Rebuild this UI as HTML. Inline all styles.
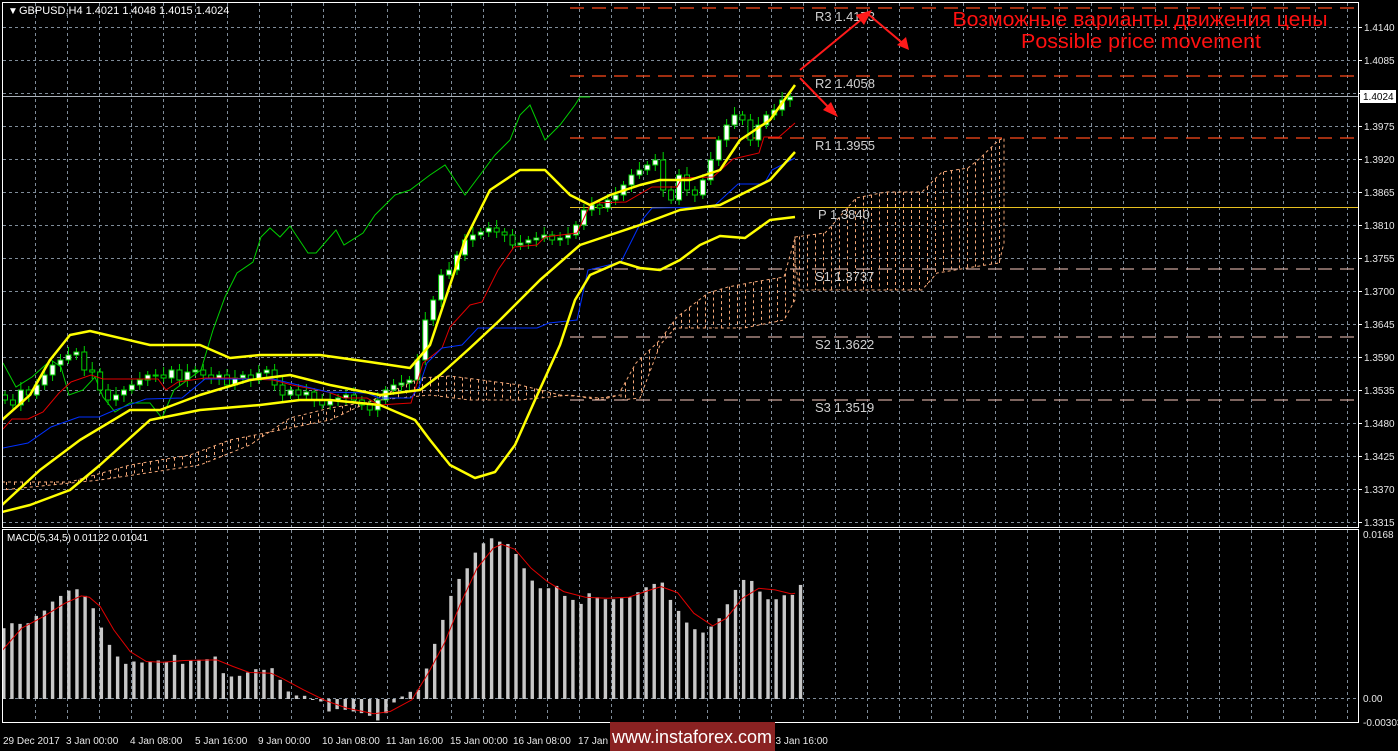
<!DOCTYPE html>
<html><head><meta charset="utf-8"><style>
html,body{margin:0;padding:0;background:#000;overflow:hidden}
svg{display:block}
text{font-family:"Liberation Sans",sans-serif}
</style></head><body>
<svg id="s" width="1398" height="751" xmlns="http://www.w3.org/2000/svg">
<defs>
<clipPath id="cm"><rect x="3" y="3" width="1355" height="524"/></clipPath>
<clipPath id="cd"><rect x="3" y="530" width="1355" height="192"/></clipPath>
</defs>
<rect width="1398" height="751" fill="#000"/>
<g id="grid" stroke="#7f8c99" stroke-width="1" stroke-dasharray="3,3"></g>
<g clip-path="url(#cm)">
<g id="cloud"></g>
<g stroke-width="1.3" stroke-dasharray="14,8">
<line x1="570" y1="8" x2="1358" y2="8" stroke="#ff4a1a"/>
<line x1="570" y1="76" x2="1358" y2="76" stroke="#ff4a1a"/>
<line x1="570" y1="138" x2="1358" y2="138" stroke="#ff4a1a"/>
<line x1="570" y1="269" x2="1358" y2="269" stroke="#c9a39a"/>
<line x1="570" y1="337" x2="1358" y2="337" stroke="#c9a39a"/>
<line x1="570" y1="400" x2="1358" y2="400" stroke="#c9a39a"/>
</g>
<line x1="570" y1="207.5" x2="1358" y2="207.5" stroke="#e8c020" stroke-width="1"/>
<line x1="2" y1="96.5" x2="1358" y2="96.5" stroke="#a9b0b8" stroke-width="1"/>
<g font-family="Liberation Mono,monospace" font-size="13" fill="#d0d0d0">
<text x="815" y="21">R3 1.4173</text>
<text x="815" y="88">R2 1.4058</text>
<text x="815" y="150">R1 1.3955</text>
<text x="818" y="219">P 1.3840</text>
<text x="815" y="281">S1 1.3737</text>
<text x="815" y="349">S2 1.3622</text>
<text x="815" y="412">S3 1.3519</text>
</g>
<polyline fill="none" stroke="#00d000" stroke-width="1" points="3,363 16,387 32,377 51,360 61,367 69,395 83,390 95,377 103,397 115,412 130,403 150,403 162,418 174,390 201,370 213,330 225,297 237,273 253,262 261,237 270,228 280,237 290,226 308,253 316,253 336,230 344,245 363,233 375,215 395,195 410,190 430,175 445,165 455,180 465,195 480,175 495,155 510,140 520,115 530,105 545,140 560,125 575,105 580,97 590,97"/>
<g id="candles"></g>
<polyline fill="none" stroke="#e00000" stroke-width="1" points="3,429 12,419 28,419 43,412 59,393 71,382 91,375 103,379 158,379 166,390 178,382 205,378 229,378 273,380 292,385 328,392 344,398 367,398 379,405 411,403 423,363 442,348 450,327 470,305 482,302 498,270 514,247 537,245 545,237 577,233 591,203 626,202 652,187 677,187 682,178 713,177 733,159 759,153 764,137 779,137 795,123"/>
<polyline fill="none" stroke="#0030ff" stroke-width="1" points="3,448 28,443 51,427 79,417 99,417 115,410 146,399 182,398 205,379 273,379 328,392 367,393 379,398 411,398 419,387 427,363 442,348 462,345 478,328 537,328 549,323 577,320 588,270 621,262 642,220 652,208 713,207 738,184 764,184 772,170 795,158"/>
<g fill="none" stroke="#ffff00" stroke-width="2.5" stroke-linejoin="round">
<polyline points="2,420 30,395 50,360 70,335 90,331 150,345 200,345 230,358 260,355 320,355 370,362 410,368 430,345 445,300 465,240 490,190 520,170 545,170 570,195 590,205 610,195 640,185 660,180 690,180 720,170 740,140 770,120 795,85"/>
<polyline points="2,505 40,470 80,440 130,410 160,410 200,395 250,380 290,375 330,385 380,395 420,390 440,375 470,348 500,320 540,280 580,245 640,225 680,210 720,205 740,195 770,180 795,152"/>
<polyline points="2,512 30,505 70,490 100,465 150,420 200,410 260,405 300,400 330,400 380,405 415,420 430,440 450,465 475,478 495,472 515,445 535,400 560,345 575,300 590,275 620,262 640,268 660,270 680,260 700,245 720,236 745,238 770,220 795,217"/>
</g>
<g stroke="#ff1a1a" stroke-width="2" fill="none">
<line x1="800" y1="70" x2="868" y2="14"/>
<line x1="868" y1="14" x2="906" y2="46"/>
<line x1="800" y1="78" x2="834" y2="113"/>
</g>
<g fill="#ff1a1a">
<polygon points="872,10 856,15 864,25"/>
<polygon points="909,50 897,45 906,37"/>
<polygon points="838,117 823,110 831,102"/>
</g>
<text x="1140" y="26" text-anchor="middle" font-size="20" fill="#ff1010" textLength="375" lengthAdjust="spacingAndGlyphs">Возможные варианты движения цены</text>
<text x="1141" y="48" text-anchor="middle" font-size="20" fill="#ff1010" textLength="240" lengthAdjust="spacingAndGlyphs">Possible price movement</text>
</g>
<g clip-path="url(#cd)">
<g id="macd"></g>
<polyline id="sig" fill="none" stroke="#e00000" stroke-width="1"/>
</g>
<rect x="2.5" y="2.5" width="1356" height="525" fill="none" stroke="#fff" stroke-width="1"/>
<rect x="2.5" y="529.5" width="1356" height="193" fill="none" stroke="#fff" stroke-width="1"/>
<g id="axis" font-size="10" fill="#e8e8e8"></g>
<rect x="1360" y="90" width="36" height="13" fill="#fff"/>
<text x="1363" y="100" font-size="10" fill="#000">1.4024</text>
<text x="8" y="14" font-size="10" fill="#fff">&#9660;</text>
<text x="19" y="14" font-size="11" fill="#fff">GBPUSD,H4  1.4021 1.4048 1.4015 1.4024</text>
<text x="7" y="541" font-size="10" fill="#fff">MACD(5,34,5) 0.01122 0.01041</text>
<text x="1363" y="538" font-size="10" fill="#e8e8e8">0.0168</text>
<text x="1363" y="702" font-size="10" fill="#e8e8e8">0.00</text>
<text x="1363" y="726" font-size="10" fill="#e8e8e8">-0.00303</text>
<g font-size="10" fill="#e8e8e8">
<text x="3" y="744">29 Dec 2017</text><text x="66" y="744">3 Jan 00:00</text><text x="130" y="744">4 Jan 08:00</text>
<text x="195" y="744">5 Jan 16:00</text><text x="258" y="744">9 Jan 00:00</text><text x="322" y="744">10 Jan 08:00</text>
<text x="386" y="744">11 Jan 16:00</text><text x="450" y="744">15 Jan 00:00</text><text x="513" y="744">16 Jan 08:00</text>
<text x="578" y="744">17 Jan 16:00</text><text x="770" y="744">23 Jan 16:00</text>
</g>
<rect x="610" y="722" width="165" height="29" fill="#8a2222"/>
<text x="692" y="743" text-anchor="middle" font-size="18" fill="#fff">www.instaforex.com</text>
</svg>
<script>
var NS="http://www.w3.org/2000/svg",s=document.getElementById('s');
function el(p,t,a){var e=document.createElementNS(NS,t);for(var k in a)e.setAttribute(k,a[k]);p.appendChild(e);return e;}
var g=document.getElementById('grid');
for(var x=35;x<1358;x+=32){el(g,'line',{x1:x+.5,y1:3,x2:x+.5,y2:527});el(g,'line',{x1:x+.5,y1:530,x2:x+.5,y2:722});}
var labs=["1.4140","1.4085","1.4030","1.3975","1.3920","1.3865","1.3810","1.3755","1.3700","1.3645","1.3590","1.3535","1.3480","1.3425","1.3370","1.3315"];
var ax=document.getElementById('axis');
for(var i=0;i<16;i++){var y=27+i*33;el(g,'line',{x1:3,y1:y+.5,x2:1358,y2:y+.5});
 el(ax,'line',{x1:1358,y1:y+.5,x2:1362,y2:y+.5,stroke:'#fff'});
 if(i!=2){var t=el(ax,'text',{x:1364,y:y+4});t.textContent=labs[i];}}
el(g,'line',{x1:3,y1:698.5,x2:1358,y2:698.5});
var c=document.getElementById('cloud');
function cloud(top,bot){var pts=top.concat(bot.slice().reverse());
 el(c,'polygon',{points:pts.map(function(p){return p.join(',')}).join(' '),fill:'none',stroke:'#f4a878','stroke-width':1,'stroke-dasharray':'3,3'});
 function yAt(a,x){for(var i=0;i<a.length-1;i++){if(x>=a[i][0]&&x<=a[i+1][0]){var f=(x-a[i][0])/((a[i+1][0]-a[i][0])||1);return a[i][1]+f*(a[i+1][1]-a[i][1]);}}return null;}
 for(var x=top[0][0]+4;x<=top[top.length-1][0];x+=8){var a=yAt(top,x),b=yAt(bot,x);if(a!=null&&b!=null)el(c,'line',{x1:x+.5,y1:a,x2:x+.5,y2:b,stroke:'#f4a878','stroke-width':1,'stroke-dasharray':'3,3'});}}
cloud([[2,482],[70,482],[130,465],[190,455],[230,440],[280,430],[330,420],[420,378],[450,376],[520,385],[560,395],[600,398],[620,395]],[[2,490],[100,480],[200,465],[250,445],[290,418],[330,408],[380,400],[430,395],[470,400],[520,400],[570,395],[600,400],[620,395]]);
cloud([[621,390],[636,363],[660,340],[677,317],[708,293],[728,287],[754,282],[784,277],[795,238]],[[621,400],[640,398],[660,345],[675,328],[744,328],[784,320],[795,300]]);
cloud([[795,237],[825,233],[835,222],[856,198],[886,192],[922,192],[942,172],[968,168],[978,160],[999,140],[1004,138]],[[795,262],[800,290],[922,290],[937,273],[973,267],[999,263],[1004,243]]);
var cl=[400,405,390,395,385,375,365,360,355,352,370,372,390,400,395,390,385,380,375,375,378,370,380,372,370,375,378,375,385,378,375,380,373,370,385,395,390,395,392,400,405,400,398,395,400,405,410,400,390,385,383,380,360,320,300,275,270,255,240,235,232,228,232,235,245,243,240,238,235,240,238,235,225,210,205,208,200,195,185,175,170,165,160,190,200,175,190,195,180,160,140,125,115,120,140,125,115,110,100,97];
var cg=document.getElementById('candles'),prev=395;
for(var i=0;i<cl.length;i++){var x=5+i*7.93,o=prev,cc=cl[i],t=Math.min(o,cc),b=Math.max(o,cc);
 el(cg,'line',{x1:x,y1:t-4-(i%3)*2,x2:x,y2:b+4+(i%4),stroke:'#00d000','stroke-width':1});
 el(cg,'rect',{x:x-2.5,y:t,width:5,height:Math.max(b-t,1),fill:cc<o?'#fff':'#000',stroke:'#00d000','stroke-width':1});prev=cc;}
var mt=[355,340,342,340,318,302,275,258,242,238,258,295,353,405,440,462,455,458,455,452,455,435,462,452,450,448,440,490,500,498,488,478,480,475,510,545,557,558,568,575,605,598,600,605,610,618,632,610,578,560,546,540,476,402,330,258,207,175,128,100,85,95,102,132,175,212,235,235,228,258,270,282,250,262,268,268,265,262,247,232,222,218,270,303,338,358,368,350,325,283,240,210,213,245,268,268,256,255,225];
var mg=document.getElementById('macd');
for(var i=0;i<mt.length;i++){var x=3.8+8.13*i-1.7,y=510+mt[i]*0.333,z=699;
 el(mg,'rect',{x:x,y:Math.min(y,z),width:3.4,height:Math.max(Math.abs(z-y),1),fill:'#c8c8c8'});}
var sp=[[5,420],[40,355],[80,320],[120,280],[150,258],[165,262],[185,290],[210,360],[240,425],[270,455],[300,457],[340,452],[400,450],[430,470],[460,488],[500,490],[520,505],[560,540],[600,572],[640,595],[690,612],[720,605],[760,570],[790,490],[820,400],[850,280],[880,175],[910,115],[925,103],[950,118],[980,175],[1010,215],[1040,245],[1080,262],[1120,265],[1160,262],[1200,240],[1220,230],[1250,248],[1280,310],[1315,348],[1340,325],[1370,265],[1400,235],[1430,240],[1460,252],[1467,250]];
document.getElementById('sig').setAttribute('points',sp.map(function(p){return (p[0]*0.542).toFixed(1)+','+(510+p[1]*0.333).toFixed(1)}).join(' '));
</script>
</body></html>
